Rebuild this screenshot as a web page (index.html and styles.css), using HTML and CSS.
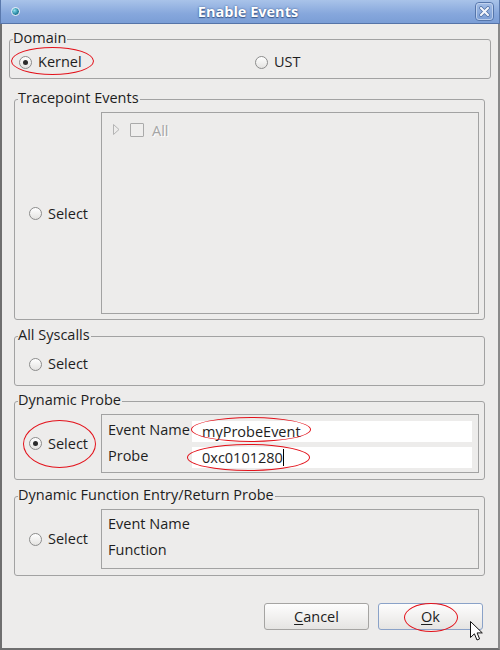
FILE: index.html
```html
<!DOCTYPE html>
<html>
<head>
<meta charset="utf-8">
<link rel="stylesheet" href="styles.css">
</head>
<body>
<div class="window">
  <div class="titlebar">
    <div class="tb-left"><span class="ball"></span></div>
    <div class="title">Enable Events</div>
    <div class="tb-right">
      <svg class="close" width="19" height="19" viewBox="0 0 19 19">
        <defs>
          <linearGradient id="cg" x1="0" y1="0" x2="0" y2="1">
            <stop offset="0" stop-color="#a3bde6"/>
            <stop offset="1" stop-color="#7a9dd4"/>
          </linearGradient>
        </defs>
        <rect x="0.5" y="0.5" width="18" height="18" rx="3.5" fill="url(#cg)" stroke="#5575aa"/>
        <rect x="1.5" y="1.5" width="16" height="16" rx="2.5" fill="none" stroke="#c9d8f0" stroke-opacity="0.8"/>
        <path d="M6 6 L13 13 M13 6 L6 13" stroke="#4c6ca2" stroke-width="3.6" stroke-linecap="round"/>
        <path d="M6 6 L13 13 M13 6 L6 13" stroke="#f3f6fb" stroke-width="2.2" stroke-linecap="round"/>
      </svg>
    </div>
  </div>
  <div class="body">
    <fieldset class="group domain">
      <legend>Domain</legend>
      <div class="domain-row">
        <label class="radio"><span class="dot on"></span>Kernel</label>
        <label class="radio"><span class="dot"></span>UST</label>
      </div>
    </fieldset>

    <fieldset class="group trace">
      <legend>Tracepoint Events</legend>
      <div class="split">
        <div class="side side-trace"><label class="radio"><span class="dot"></span>Select</label></div>
        <div class="panel tree">
          <div class="tree-row">
            <svg class="tri" width="7" height="11" viewBox="0 0 7 11"><path d="M0.5 0.5 L6 5.5 L0.5 10.5 Z" fill="none" stroke="#b4b4b4"/></svg>
            <span class="check"></span>
            <span class="disabled">All</span>
          </div>
        </div>
      </div>
    </fieldset>

    <fieldset class="group syscalls">
      <legend>All Syscalls</legend>
      <div class="single-row">
        <label class="radio"><span class="dot"></span>Select</label>
      </div>
    </fieldset>

    <fieldset class="group probe">
      <legend>Dynamic Probe</legend>
      <div class="split">
        <div class="side"><label class="radio"><span class="dot on"></span>Select</label></div>
        <div class="panel form">
          <div class="flabel">Event Name</div>
          <div class="field">myProbeEvent</div>
          <div class="flabel">Probe</div>
          <div class="field">0xc0101280<span class="caret"></span></div>
        </div>
      </div>
    </fieldset>

    <fieldset class="group func">
      <legend>Dynamic Function Entry/Return Probe</legend>
      <div class="split">
        <div class="side"><label class="radio"><span class="dot"></span>Select</label></div>
        <div class="panel form form-func">
          <div class="flabel">Event Name</div>
          <div class="fempty"></div>
          <div class="flabel">Function</div>
          <div class="fempty"></div>
        </div>
      </div>
    </fieldset>

    <div class="buttons">
      <button class="btn"><u>C</u>ancel</button>
      <button class="btn default"><u>O</u>k</button>
    </div>
  </div>

  <div class="mark m-kernel"></div>
  <div class="mark m-select"></div>
  <div class="mark m-event"></div>
  <div class="mark m-probe"></div>
  <div class="mark m-ok"></div>

  <svg class="cursor" width="14" height="21" viewBox="0 0 14 21">
    <path d="M0.5 0.5 L0.5 16.5 L4.4 12.8 L7 19 L9.6 17.9 L7.1 11.9 L12.3 11.9 Z" fill="#fff" stroke="#111" stroke-linejoin="round"/>
  </svg>
</div>
</body>
</html>
```

FILE: styles.css
```css
html, body {
  margin: 0;
  padding: 0;
}

body {
  font-family: "Open Sans", "DejaVu Sans", sans-serif;
  font-size: 14.5px;
  color: #1e1e1e;
}

.window {
  position: relative;
  width: 500px;
  height: 650px;
  background: #edeceb;
  display: flex;
  flex-direction: column;
  overflow: hidden;
}

/* ---------- title bar ---------- */
.titlebar {
  height: 24px;
  box-sizing: border-box;
  border-bottom: 1px solid #5674a8;
  border-left: 1px solid #5a79ad;
  border-right: 1px solid #5a79ad;
  background: linear-gradient(#a9c3e9, #86a7dc 60%, #7b9ed6);
  display: grid;
  grid-template-columns: 1fr auto 1fr;
  align-items: center;
}

.tb-left {
  display: flex;
  align-items: center;
  padding-left: 10px;
}

.ball {
  width: 7px;
  height: 7px;
  border-radius: 50%;
  border: 1px solid #eef3fb;
  background: radial-gradient(circle at 35% 35%, #8fe0ee, #2a8aa6 55%, #15506a);
}

.title {
  font-weight: bold;
  font-size: 14.5px;
  line-height: 22px;
  color: #ffffff;
  text-shadow: 0 0 2px #3c5a8c, 0 1px 1px #3c5a8c;
  padding-right: 4px;
}

.tb-right {
  display: flex;
  justify-content: flex-end;
  padding-right: 5px;
}

.close {
  display: block;
}

/* ---------- body ---------- */
.body {
  flex: 1;
  border-left: 2px solid #6f6f6f;
  border-right: 2px solid #8a8a8a;
  border-bottom: 2px solid #6f6f6f;
  padding: 5px 15px 18px 0;
  display: flex;
  flex-direction: column;
  align-items: flex-start;
}

.group {
  margin: 0 0 0 12px;
  padding: 0;
  min-width: 0;
  width: 471px;
  box-sizing: border-box;
  border: 1px solid #a2a2a2;
  border-radius: 3px;
}

.group legend {
  margin-left: 3px;
  padding: 1px 1px 3px 0;
  line-height: 16px;
}

.domain {
  margin-left: 7px;
  width: 482px;
}

.trace { margin-top: 10px; }
.syscalls { margin-top: 6px; }
.probe { margin-top: 5px; }
.func { margin-top: 6px; }

/* ---------- radio ---------- */
.radio {
  display: flex;
  align-items: center;
  gap: 6px;
  line-height: 16px;
}

.dot {
  width: 13px;
  height: 13px;
  box-sizing: border-box;
  border-radius: 50%;
  border: 1px solid #8c8c8c;
  background: linear-gradient(#ffffff, #e4e3e1);
  display: flex;
  align-items: center;
  justify-content: center;
}

.dot.on::after {
  content: "";
  width: 5px;
  height: 5px;
  border-radius: 50%;
  background: #2b2b2b;
}

/* ---------- domain ---------- */
.domain-row {
  display: grid;
  grid-template-columns: 236px 1fr;
  align-items: center;
  height: 26px;
  padding: 0 0 3px 9px;
}

/* ---------- generic split ---------- */
.split {
  display: flex;
  align-items: stretch;
}

.side {
  width: 86px;
  flex: none;
  box-sizing: border-box;
  padding: 0 0 3px 14px;
  display: flex;
  align-items: center;
}

.side-trace {
  padding-bottom: 1px;
}

.panel {
  flex: 1;
  border: 1px solid #a2a2a2;
  margin: 3px 5px 6px 0;
}

/* ---------- tracepoint tree ---------- */
.tree {
  height: 202px;
  box-sizing: border-box;
  margin-bottom: 5px;
  padding: 8px 0 0 11px;
}

.tree-row {
  display: flex;
  align-items: center;
  height: 18px;
}

.tri {
  display: block;
  margin-top: -1px;
}

.check {
  width: 12px;
  height: 12px;
  border: 1px solid #aaaaaa;
  border-radius: 1px;
  margin-left: 10px;
  background: #efeeed;
}

.disabled {
  margin-left: 8px;
  color: #a5a5a5;
  text-shadow: 1px 1px 0 #ffffff;
}

/* ---------- syscalls ---------- */
.single-row {
  height: 36px;
  padding: 0 0 3px 14px;
  display: flex;
  align-items: center;
}

/* ---------- forms ---------- */
.form {
  display: grid;
  grid-template-columns: 84px 1fr;
  grid-auto-rows: 21px;
  row-gap: 5px;
  padding: 6px 6px 4px 6px;
}

.form-func {
  padding: 5px 6px 6px 6px;
}

.flabel {
  line-height: 18px;
  white-space: nowrap;
}

.field {
  background: #ffffff;
  line-height: 21px;
  padding-left: 10px;
  white-space: nowrap;
  display: flex;
  align-items: center;
}

.caret {
  display: inline-block;
  width: 0;
  height: 17px;
  border-left: 1px solid #000;
  margin-left: 0;
}

/* ---------- buttons ---------- */
.buttons {
  margin-top: 27px;
  align-self: stretch;
  display: flex;
  justify-content: flex-end;
  gap: 9px;
}

.btn {
  width: 105px;
  height: 27px;
  box-sizing: border-box;
  border: 1px solid #a5a4a2;
  border-radius: 3px;
  background: linear-gradient(#fdfdfd, #f2f1f0 50%, #e5e4e2);
  font-family: "Open Sans", "DejaVu Sans", sans-serif;
  font-size: 14.5px;
  color: #1e1e1e;
  padding: 0;
  line-height: 25px;
}

.btn u {
  text-decoration-thickness: 1px;
  text-underline-offset: 2px;
}

.btn.default {
  border-color: #8aa2c8;
}

/* ---------- annotation marks ---------- */
.mark {
  position: absolute;
  border: 1px solid #e3121b;
  border-radius: 50%;
  box-sizing: border-box;
}

.m-kernel { left: 11px; top: 47px; width: 83px; height: 28px; }
.m-select { left: 23px; top: 420px; width: 73px; height: 48px; }
.m-event { left: 191px; top: 417px; width: 120px; height: 25px; }
.m-probe { left: 187px; top: 444px; width: 123px; height: 27px; }
.m-ok { left: 404px; top: 603px; width: 54px; height: 29px; }

.cursor {
  position: absolute;
  left: 470px;
  top: 621px;
}
```
